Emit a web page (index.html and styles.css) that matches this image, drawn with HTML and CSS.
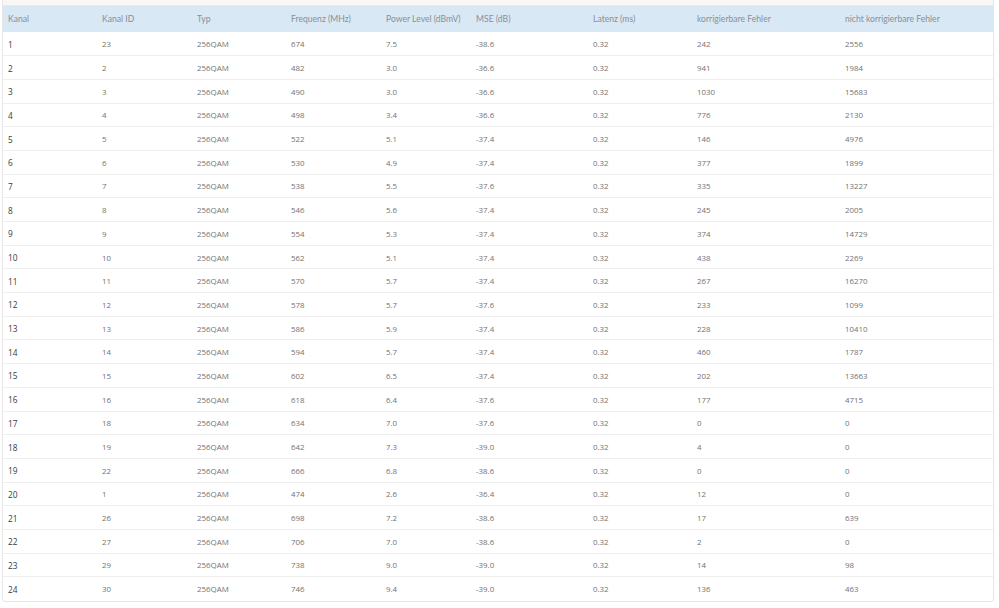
FILE: index.html
```html
<!DOCTYPE html>
<html>
<head>
<meta charset="utf-8">
<link rel="stylesheet" href="styles.css">
</head>
<body>
<div class="page">
  <div class="card">
    <div class="topband"></div>
    <table class="channels">
      <colgroup>
        <col class="c1"><col class="c2"><col class="c3"><col class="c4"><col class="c5"><col class="c6"><col class="c7"><col class="c8"><col class="c9">
      </colgroup>
      <thead>
        <tr><th>Kanal</th><th>Kanal ID</th><th>Typ</th><th>Frequenz (MHz)</th><th>Power Level (dBmV)</th><th>MSE (dB)</th><th>Latenz (ms)</th><th>korrigierbare Fehler</th><th>nicht korrigierbare Fehler</th></tr>
      </thead>
      <tbody id="rows"></tbody>
    </table>
  </div>
</div>
<script src="script.js"></script>
</body>
</html>
```
FILE: script.js
```js
var data = [
[1,23,674,"7.5","-38.6",242,2556],
[2,2,482,"3.0","-36.6",941,1984],
[3,3,490,"3.0","-36.6",1030,15683],
[4,4,498,"3.4","-36.6",776,2130],
[5,5,522,"5.1","-37.4",146,4976],
[6,6,530,"4.9","-37.4",377,1899],
[7,7,538,"5.5","-37.6",335,13227],
[8,8,546,"5.6","-37.4",245,2005],
[9,9,554,"5.3","-37.4",374,14729],
[10,10,562,"5.1","-37.4",438,2269],
[11,11,570,"5.7","-37.4",267,16270],
[12,12,578,"5.7","-37.6",233,1099],
[13,13,586,"5.9","-37.4",228,10410],
[14,14,594,"5.7","-37.4",460,1787],
[15,15,602,"6.5","-37.4",202,13663],
[16,16,618,"6.4","-37.6",177,4715],
[17,18,634,"7.0","-37.6",0,0],
[18,19,642,"7.3","-39.0",4,0],
[19,22,666,"6.8","-38.6",0,0],
[20,1,474,"2.6","-36.4",12,0],
[21,26,698,"7.2","-38.6",17,639],
[22,27,706,"7.0","-38.6",2,0],
[23,29,738,"9.0","-39.0",14,98],
[24,30,746,"9.4","-39.0",136,463]
];
var tb = document.getElementById("rows");
var html = "";
data.forEach(function(r){
  html += "<tr><td class='num'>"+r[0]+"</td><td>"+r[1]+"</td><td>256QAM</td><td>"+r[2]+"</td><td>"+r[3]+"</td><td>"+r[4]+"</td><td>0.32</td><td>"+r[5]+"</td><td>"+r[6]+"</td></tr>";
});
tb.innerHTML = html;
```
FILE: styles.css
```css
html, body { margin: 0; padding: 0; background: #fff; }
.page { padding: 0 6px 0 2px; }
.card {
  border: 1px solid #e6e6e6;
  border-top: none;
  border-radius: 0 0 4px 4px;
  overflow: hidden;
  width: 990px;
}
.topband { height: 6px; background: #f8f7f5; border-bottom: 1px solid #ece9e4; box-sizing: border-box; }
.channels { border-collapse: collapse; table-layout: fixed; width: 990px; }
.c1 { width: 94px; } .c2 { width: 95px; } .c3 { width: 94px; } .c4 { width: 95px; }
.c5 { width: 90px; } .c6 { width: 117px; } .c7 { width: 104px; } .c8 { width: 148px; } .c9 { width: 153px; }
.channels th {
  background: #d9e8f5;
  height: 26px;
  padding: 0 0 0 5px;
  text-align: left;
  font: 400 8.6px "Lato", "Noto Sans", sans-serif;
  color: #8a8f94;
  box-sizing: border-box;
}
.channels td {
  height: 23.7px;
  padding: 1px 0 0 5px;
  border-top: 1px solid #efefef;
  font: 400 7.9px "Open Sans", "Noto Sans", sans-serif;
  color: #737373;
  box-sizing: border-box;
}
.channels tbody tr:first-child td { border-top: none; }
.channels td.num { font-size: 8.3px; color: #3a3a3a; }
```
